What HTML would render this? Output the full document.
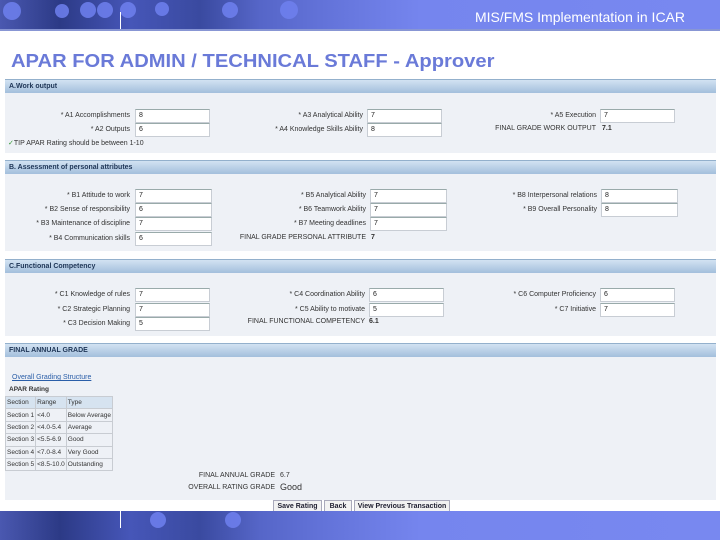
<!DOCTYPE html>
<html><head><meta charset="utf-8"><style>
*{margin:0;padding:0;box-sizing:border-box}
body{width:720px;height:540px;background:#fff;position:relative;overflow:hidden;font-family:"Liberation Sans",sans-serif}
.band{position:absolute;left:0;width:720px;background:linear-gradient(90deg,#4a58b0 0px,#2c3a86 60px,#4656b8 130px,#3a4aa0 200px,#5666c8 260px,#6272d8 320px,#7585ee 420px,#7888f0 720px)}
.dot{position:absolute;border-radius:50%;background:#6e80ee;opacity:.85}
.a{position:absolute}
.hdr{position:absolute;left:5px;width:711px;height:14px;background:linear-gradient(#d2e2f2,#a3bfdc);border-top:1px solid #93b0cc;font-size:7px;color:#1e3556;padding:3px 4px;font-weight:bold}
.pan{position:absolute;left:5px;width:711px;background:#eef1f6}
.l{position:absolute;font-size:7px;color:#333;text-align:right;width:200px;line-height:14px}
.in{position:absolute;height:14px;background:#fff;border:1px solid #c8cdd4;border-top-color:#9aa;font-size:7px;line-height:12px;padding-left:3px;color:#222}
.v{position:absolute;font-size:7px;font-weight:bold;color:#333;line-height:14px}
table{position:absolute;left:5px;top:396px;border-collapse:collapse;font-size:6.5px;color:#333}
td{border:1px solid #c8ccd2;height:12.4px;padding:0 1px;white-space:nowrap}
.btn{position:absolute;top:500px;height:12px;border:1px solid #aab;background:#f2f2f2;font-size:7px;color:#223;font-weight:bold;text-align:center;line-height:11px}
</style></head><body>
<div class="band" style="top:0;height:29px"></div>
<div class="dot" style="left:3px;top:2px;width:18px;height:18px"></div>
<div class="dot" style="left:55px;top:4px;width:14px;height:14px"></div>
<div class="dot" style="left:80px;top:2px;width:16px;height:16px"></div>
<div class="dot" style="left:97px;top:2px;width:16px;height:16px"></div>
<div class="dot" style="left:120px;top:2px;width:16px;height:16px"></div>
<div class="dot" style="left:155px;top:2px;width:14px;height:14px"></div>
<div class="dot" style="left:222px;top:2px;width:16px;height:16px"></div>
<div class="dot" style="left:280px;top:1px;width:18px;height:18px"></div>
<div class="a" style="left:120px;top:12px;width:1px;height:17px;background:#fff"></div>
<div class="a" style="left:0;top:29px;width:720px;height:2px;background:#8896d4"></div>
<div class="a" style="right:35px;top:9px;font-size:14px;color:#fff">MIS/FMS Implementation in ICAR</div>
<div class="a" style="left:11px;top:51px;font-size:18px;font-weight:bold;color:#6a7ad8;transform:scaleX(1.12);transform-origin:0 0;white-space:nowrap">APAR FOR ADMIN / TECHNICAL STAFF - Approver</div>

<div class="pan" style="top:93px;height:60px"></div>
<div class="hdr" style="top:79px">A.Work output</div>
<div class="l" style="left:-70px;top:109px">* A1 Accomplishments</div><div class="in" style="left:135px;top:109px;width:75px">8</div>
<div class="l" style="left:-70px;top:123px">* A2 Outputs</div><div class="in" style="left:135px;top:123px;width:75px">6</div>
<div class="l" style="left:163px;top:109px">* A3 Analytical Ability</div><div class="in" style="left:367px;top:109px;width:75px">7</div>
<div class="l" style="left:163px;top:123px">* A4 Knowledge Skills Ability</div><div class="in" style="left:367px;top:123px;width:75px">8</div>
<div class="l" style="left:396px;top:109px">* A5 Execution</div><div class="in" style="left:600px;top:109px;width:75px">7</div>
<div class="l" style="left:396px;top:122px">FINAL GRADE WORK OUTPUT</div><div class="v" style="left:602px;top:122px">7.1</div>
<div class="a" style="left:8px;top:139px;font-size:7px;color:#333"><span style="color:#393">&#10003;</span>TIP APAR Rating should be between 1-10</div>

<div class="pan" style="top:174px;height:77px"></div>
<div class="hdr" style="top:160px">B. Assessment of personal attributes</div>
<div class="l" style="left:-70px;top:189px">* B1 Attitude to work</div><div class="in" style="left:135px;top:189px;width:77px">7</div>
<div class="l" style="left:-70px;top:203px">* B2 Sense of responsibility</div><div class="in" style="left:135px;top:203px;width:77px">6</div>
<div class="l" style="left:-70px;top:217px">* B3 Maintenance of discipline</div><div class="in" style="left:135px;top:217px;width:77px">7</div>
<div class="l" style="left:-70px;top:232px">* B4 Communication skills</div><div class="in" style="left:135px;top:232px;width:77px">6</div>
<div class="l" style="left:166px;top:189px">* B5 Analytical Ability</div><div class="in" style="left:370px;top:189px;width:77px">7</div>
<div class="l" style="left:166px;top:203px">* B6 Teamwork Ability</div><div class="in" style="left:370px;top:203px;width:77px">7</div>
<div class="l" style="left:166px;top:217px">* B7 Meeting deadlines</div><div class="in" style="left:370px;top:217px;width:77px">7</div>
<div class="l" style="left:166px;top:231px">FINAL GRADE PERSONAL ATTRIBUTE</div><div class="v" style="left:371px;top:231px">7</div>
<div class="l" style="left:397px;top:189px">* B8 Interpersonal relations</div><div class="in" style="left:601px;top:189px;width:77px">8</div>
<div class="l" style="left:397px;top:203px">* B9 Overall Personality</div><div class="in" style="left:601px;top:203px;width:77px">8</div>

<div class="pan" style="top:273px;height:63px"></div>
<div class="hdr" style="top:259px">C.Functional Competency</div>
<div class="l" style="left:-70px;top:288px">* C1 Knowledge of rules</div><div class="in" style="left:135px;top:288px;width:75px">7</div>
<div class="l" style="left:-70px;top:303px">* C2 Strategic Planning</div><div class="in" style="left:135px;top:303px;width:75px">7</div>
<div class="l" style="left:-70px;top:317px">* C3 Decision Making</div><div class="in" style="left:135px;top:317px;width:75px">5</div>
<div class="l" style="left:165px;top:288px">* C4 Coordination Ability</div><div class="in" style="left:369px;top:288px;width:75px">6</div>
<div class="l" style="left:165px;top:303px">* C5 Ability to motivate</div><div class="in" style="left:369px;top:303px;width:75px">5</div>
<div class="l" style="left:165px;top:315px">FINAL FUNCTIONAL COMPETENCY</div><div class="v" style="left:369px;top:315px">6.1</div>
<div class="l" style="left:396px;top:288px">* C6 Computer Proficiency</div><div class="in" style="left:600px;top:288px;width:75px">6</div>
<div class="l" style="left:396px;top:303px">* C7 Initiative</div><div class="in" style="left:600px;top:303px;width:75px">7</div>

<div class="pan" style="top:357px;height:143px"></div>
<div class="hdr" style="top:343px">FINAL ANNUAL GRADE</div>
<div class="a" style="left:12px;top:374px;font-size:7px;color:#2a5ea8;text-decoration:underline">Overall Grading Structure</div>
<div class="a" style="left:9px;top:386px;font-size:6.5px;font-weight:bold;color:#333">APAR Rating</div>
<table>
<tr style="background:#d6e3f0"><td>Section</td><td>Range</td><td>Type</td></tr>
<tr><td>Section 1</td><td>&lt;4.0</td><td>Below Average</td></tr>
<tr><td>Section 2</td><td>&lt;4.0-5.4</td><td>Average</td></tr>
<tr><td>Section 3</td><td>&lt;5.5-6.9</td><td>Good</td></tr>
<tr><td>Section 4</td><td>&lt;7.0-8.4</td><td>Very Good</td></tr>
<tr><td>Section 5</td><td>&lt;8.5-10.0</td><td>Outstanding</td></tr>
</table>
<div class="l" style="left:75px;top:469px">FINAL ANNUAL GRADE</div><div class="v" style="left:280px;top:469px;font-weight:normal">6.7</div>
<div class="l" style="left:75px;top:481px">OVERALL RATING GRADE</div><div class="a" style="left:280px;top:482px;font-size:9px;color:#333">Good</div>
<div class="btn" style="left:273px;width:49px">Save Rating</div>
<div class="btn" style="left:324px;width:28px">Back</div>
<div class="btn" style="left:354px;width:96px">View Previous Transaction</div>

<div class="band" style="top:511px;height:29px"></div>
<div class="dot" style="left:150px;top:512px;width:16px;height:16px"></div>
<div class="dot" style="left:225px;top:512px;width:16px;height:16px"></div>
<div class="a" style="left:120px;top:511px;width:1px;height:17px;background:#fff"></div>
</body></html>
